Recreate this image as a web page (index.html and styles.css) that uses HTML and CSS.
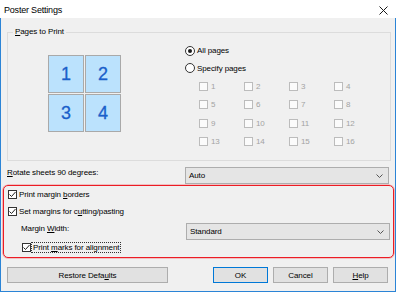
FILE: index.html
```html
<!doctype html>
<html lang="en">

<head>
    <meta charset="utf-8">
    <link rel="stylesheet" href="styles.css">
</head>

<body>
    <div class="dialog">
        <div class="titlebar">
            <span class="title">Poster Settings</span>
            <svg class="close" width="9" height="9" viewBox="0 0 9 9">
                <path d="M0.5 0.5 L8.5 8.5 M8.5 0.5 L0.5 8.5" stroke="#1a1a1a" stroke-width="1" fill="none" />
            </svg>
        </div>

        <div class="client">
            <fieldset class="group">
                <legend><u>P</u>ages to Print</legend>
                <div class="group-body">
                    <div class="tiles">
                        <div class="tile">1</div>
                        <div class="tile">2</div>
                        <div class="tile">3</div>
                        <div class="tile">4</div>
                    </div>
                    <div class="pages">
                        <div class="radio-row first"><span class="radio checked"></span><span>All pages</span></div>
                        <div class="radio-row"><span class="radio"></span><span>Specify pages</span></div>
                        <div class="page-grid">
                            <div class="pg"><span class="box"></span>1</div>
                            <div class="pg"><span class="box"></span>2</div>
                            <div class="pg"><span class="box"></span>3</div>
                            <div class="pg"><span class="box"></span>4</div>
                            <div class="pg"><span class="box"></span>5</div>
                            <div class="pg"><span class="box"></span>6</div>
                            <div class="pg"><span class="box"></span>7</div>
                            <div class="pg"><span class="box"></span>8</div>
                            <div class="pg"><span class="box"></span>9</div>
                            <div class="pg"><span class="box"></span>10</div>
                            <div class="pg"><span class="box"></span>11</div>
                            <div class="pg"><span class="box"></span>12</div>
                            <div class="pg"><span class="box"></span>13</div>
                            <div class="pg"><span class="box"></span>14</div>
                            <div class="pg"><span class="box"></span>15</div>
                            <div class="pg"><span class="box"></span>16</div>
                        </div>
                    </div>
                </div>
            </fieldset>

            <div class="row rotate">
                <span class="lbl"><u>R</u>otate sheets 90 degrees:</span>
                <div class="combo">
                    <span>Auto</span>
                    <svg width="7" height="4" viewBox="0 0 7 4"><path d="M0.5 0.5 L3.5 3.5 L6.5 0.5" stroke="#555" fill="none" /></svg>
                </div>
            </div>

            <div class="marked">
                <div class="check-row first">
                    <span class="check"><svg width="7" height="7" viewBox="0 0 7 7"><path d="M0.5 3.5 L2.5 5.5 L6.5 1" stroke="#222" fill="none" /></svg></span>
                    <span>Print margin <u>b</u>orders</span>
                </div>
                <div class="check-row">
                    <span class="check"><svg width="7" height="7" viewBox="0 0 7 7"><path d="M0.5 3.5 L2.5 5.5 L6.5 1" stroke="#222" fill="none" /></svg></span>
                    <span>Set margins for c<u>u</u>tting/pasting</span>
                </div>
                <div class="row width">
                    <span class="lbl">Margin <u>W</u>idth:</span>
                    <div class="combo">
                        <span>Standard</span>
                        <svg width="7" height="4" viewBox="0 0 7 4"><path d="M0.5 0.5 L3.5 3.5 L6.5 0.5" stroke="#555" fill="none" /></svg>
                    </div>
                </div>
                <div class="check-row sub">
                    <span class="check"><svg width="7" height="7" viewBox="0 0 7 7"><path d="M0.5 3.5 L2.5 5.5 L6.5 1" stroke="#222" fill="none" /></svg></span>
                    <span class="focus">Print <u>m</u>arks for alignment</span>
                </div>
            </div>

            <div class="buttons">
                <div class="btn restore"><span>Restore Defa<u>u</u>lts</span></div>
                <div class="btn ok">OK</div>
                <div class="btn">Cancel</div>
                <div class="btn"><span><u>H</u>elp</span></div>
            </div>
        </div>
    </div>
</body>

</html>
```

FILE: styles.css
```css
* {
    padding: 0;
    margin: 0;
    box-sizing: border-box;
}

body {
    background: #fff;
}

u {
    text-decoration: underline;
    text-underline-offset: 1px;
}

.dialog {
    width: 396px;
    height: 292px;
    display: flex;
    flex-direction: column;
    font-family: "Liberation Sans", Arial, sans-serif;
    font-size: 8px;
    letter-spacing: -0.1px;
    color: #000;
}

/* title bar */

.titlebar {
    height: 18px;
    background: #fff;
    display: flex;
    align-items: center;
    justify-content: space-between;
    padding: 2px 8px 0 4px;
}

.title {
    font-size: 9px;
    letter-spacing: -0.2px;
}

/* client area */

.client {
    flex: 1;
    background: #f0f0f0;
    border: 1px solid #2b84d6;
    border-top: none;
    display: flex;
    flex-direction: column;
}

.group {
    margin: 9px 4px 0 6px;
    height: 134px;
    border: 1px solid #dcdcdc;
}

.group legend {
    line-height: 10px;
    padding: 0 2px;
    margin-left: 5px;
}

.group-body {
    display: flex;
    padding-top: 5px;
}

.tiles {
    display: grid;
    grid-template-columns: 36px 36px;
    grid-auto-rows: 38px;
    gap: 1px;
    margin: 13px 0 0 40px;
    align-self: flex-start;
}

.tile {
    background: #bbe2fd;
    border: 1px solid #a9a9a9;
    color: #1a5fca;
    font-size: 18px;
    display: flex;
    align-items: center;
    justify-content: center;
    -webkit-text-stroke: 0.3px #1a5fca;
}

.pages {
    margin-left: 64px;
}

.radio-row {
    height: 18px;
    display: flex;
    align-items: center;
}

.radio-row.first {
    height: 17px;
}

.radio {
    width: 10px;
    height: 10px;
    border: 1px solid #333;
    border-radius: 50%;
    background: #fff;
    margin-right: 2px;
    display: flex;
    align-items: center;
    justify-content: center;
}

.radio.checked::after {
    content: '';
    width: 4px;
    height: 4px;
    border-radius: 50%;
    background: #1a1a1a;
}

.page-grid {
    display: grid;
    grid-template-columns: repeat(4, 45px);
    grid-auto-rows: 18.5px;
    margin-left: 14px;
}

.pg {
    display: flex;
    align-items: center;
    color: #a3a3a3;
}

.box {
    width: 9px;
    height: 9px;
    border: 1px solid #bcbcbc;
    background: #fbfbfb;
    margin-right: 3px;
}

/* rows with a combo */

.row {
    display: flex;
    align-items: flex-start;
}

.lbl {
    line-height: 11px;
}

.rotate {
    margin: 6px 6px 0 6px;
}

.combo {
    margin-left: auto;
    width: 204px;
    height: 17px;
    background: #e5e5e5;
    border: 1px solid #adadad;
    display: flex;
    align-items: center;
    justify-content: space-between;
    padding: 0 5px 0 3px;
}

/* red marked region */

.marked {
    margin: 1px 1px 0 2px;
    height: 73px;
    border: 1px solid #ec1c24;
    border-radius: 5px;
    box-shadow: 0 0 0 0.6px rgba(236, 28, 36, 0.45);
}

.check-row {
    height: 17px;
    display: flex;
    align-items: center;
    padding-left: 4px;
}

.check {
    width: 9px;
    height: 9px;
    border: 1px solid #333;
    background: #fff;
    margin-right: 2px;
    display: flex;
    align-items: center;
    justify-content: center;
}

.width {
    margin-top: 3px;
    padding: 0 3px 0 17px;
}

.check-row.sub {
    height: 14px;
    padding-left: 18px;
}

.check-row.sub .check {
    margin-right: 0;
}

.focus {
    border: 1px dotted #333;
    line-height: 9px;
    padding: 0 1px;
}

/* buttons */

.buttons {
    display: flex;
    gap: 5px;
    margin: 9px 7px 0 6px;
}

.btn {
    width: 55px;
    height: 16px;
    background: #e1e1e1;
    border: 1px solid #adadad;
    display: flex;
    align-items: center;
    justify-content: center;
}

.btn.restore {
    width: 161px;
    margin-right: auto;
}

.btn.ok {
    border-color: #0078d7;
}
```
